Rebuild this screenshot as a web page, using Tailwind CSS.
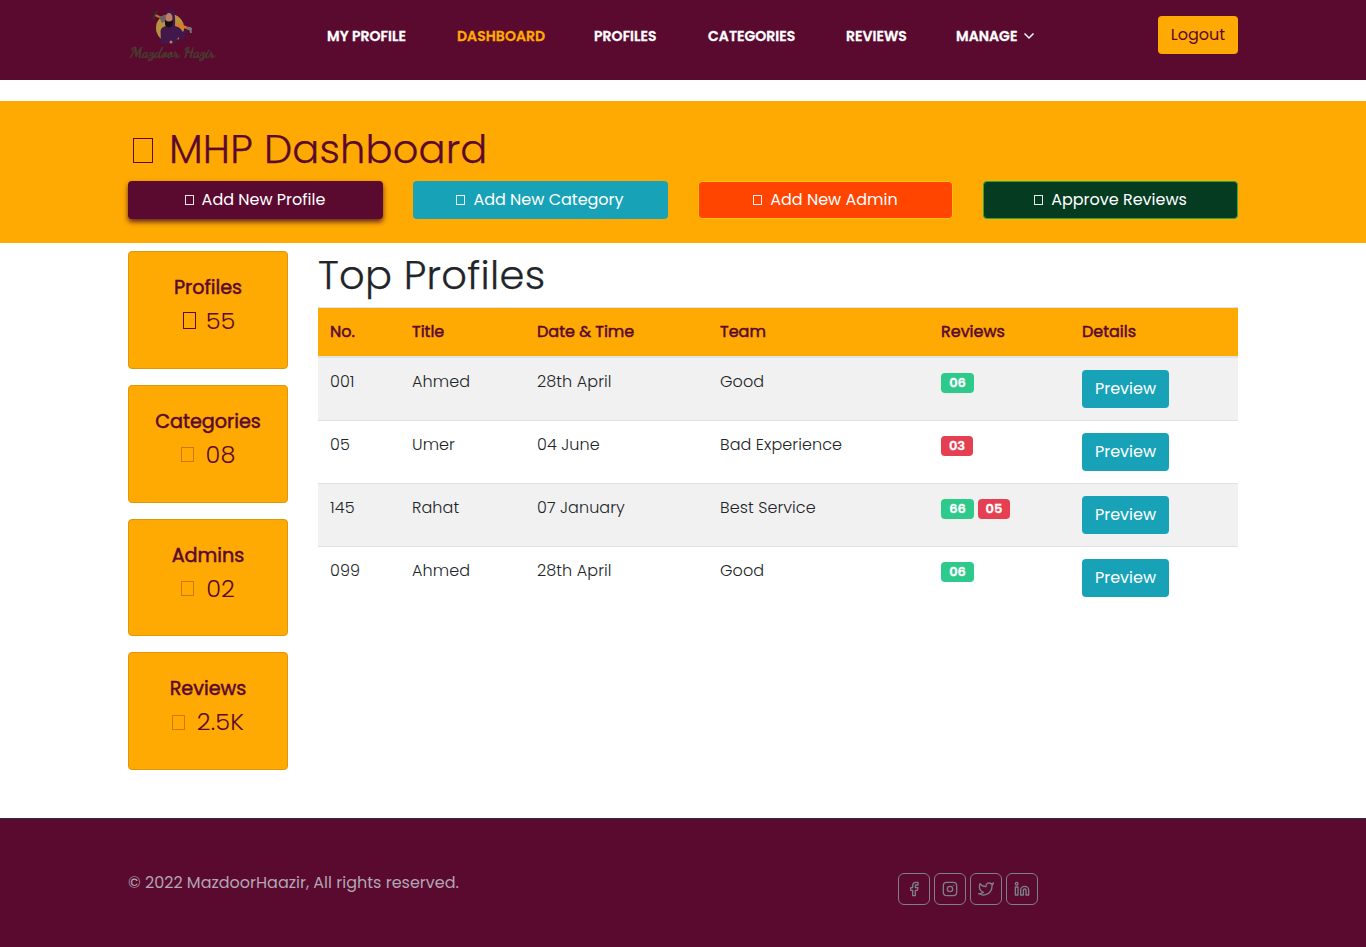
<!DOCTYPE html>
<html lang="en">
<head>
<meta charset="utf-8">
<title>MHP Dashboard</title>
<script src="https://cdn.jsdelivr.net/npm/@tailwindcss/browser@4"></script>
</head>
<body class="bg-white text-[#212529] font-['Poppins','Inter','Open_Sans',sans-serif] text-base font-light overflow-x-hidden">
<div class="h-[947px] flex flex-col">
<header class="h-20 bg-[#5a092f] shrink-0">
  <div class="w-[1110px] mx-auto flex items-start">
    <svg class="w-[90px] h-[64px] shrink-0" viewBox="0 0 90 64">
      <circle cx="42" cy="28" r="14" fill="#b8923f"/>
      <path d="M27 15L38 20" stroke="#c76a25" stroke-width="2"/>
      <path d="M25.500 19q0-5 4-8" fill="none" stroke="#2f3422" stroke-width="2"/>
      <path d="M31 17l6-2 1 6-4 2z" fill="#6a6468"/>
      <path d="M33 44l-.5-13q.5-4 5.500-5-2-17 4-17.500 6 .5 5 17.500 5 1 6.500 4l3.500 5q0 5-4 5-2-1-3-3l-1 6z" fill="#42174a"/>
      <ellipse cx="41" cy="18" rx="3.500" ry="5" fill="#bd7d66"/>
      <path d="M37 20q4 3 7.500 0v5q-3.500 5-7.500 0z" fill="#160d14"/>
      <path d="M48.500 24L62 29" stroke="#e27622" stroke-width="2.500"/>
      <path d="M58 28l6 1M62 27l1 6" stroke="#77727a" stroke-width="2"/>
      <path d="M54 34l5-3" stroke="#42174a" stroke-width="3"/>
      <circle cx="43" cy="42" r="1.500" fill="#c47a5f"/>
      <text x="2" y="56.500" textLength="85" lengthAdjust="spacingAndGlyphs" font-family="Dancing Script, Brush Script MT, Liberation Serif, cursive" font-weight="bold" font-size="14" fill="#4a3d30" stroke="#4a3d30" stroke-width=".4">Mazdoor Hazir</text>
    </svg>
    <nav class="ml-[109px] mt-[25px] flex h-[22px] items-center text-sm font-semibold tracking-[0.050px] [-webkit-text-stroke:0.300px] text-white whitespace-nowrap">
      <a class="w-[130px]">MY PROFILE</a>
      <a class="w-[137px] text-[#ffa903]">DASHBOARD</a>
      <a class="w-[114px]">PROFILES</a>
      <a class="w-[138px]">CATEGORIES</a>
      <a class="w-[110px]">REVIEWS</a>
      <a class="flex items-center"><span class="w-[67px]">MANAGE</span>
        <svg class="w-3 h-3" viewBox="0 0 12 12" fill="none" stroke="#fff" stroke-width="1.500"><path d="M1.500 3.500L6 8l4.500-4.500"/></svg></a>
    </nav>
    <button class="ml-auto mt-4 w-20 h-[38px] rounded bg-[#ffa903] text-[#5a092f] font-normal">Logout</button>
  </div>
</header>
<section class="mt-[21px] h-[142px] bg-[#ffa903] shrink-0">
  <div class="w-[1110px] mx-auto pt-6">
    <h1 class="h-12 flex items-center text-[40px] leading-[48px] text-[#5a092f] whitespace-nowrap"><span class="ml-[5px] mt-[3px] mr-4 w-[20px] h-[25px] border border-[#5a092f]"></span><span class="tracking-[0.150px] [-webkit-text-stroke:0.250px]">MHP Dashboard</span></h1>
    <div class="mt-2 grid grid-cols-4 gap-[30px] text-white font-normal">
      <a class="h-[38px] rounded bg-[#5a092f] flex items-center justify-center gap-2 shadow-[0_3px_5px_rgba(60,10,40,0.8)]"><span class="w-[9px] h-[10px] border border-white/90"></span><span class="mr-px">Add New Profile</span></a>
      <a class="h-[38px] rounded bg-[#18a2b8] flex items-center justify-center gap-2"><span class="w-[9px] h-[10px] border border-white/90"></span><span class="mr-px">Add New Category</span></a>
      <a class="h-[38px] rounded bg-[#ff4500] border border-[#ffc107] flex items-center justify-center gap-2"><span class="w-[9px] h-[10px] border border-white/90"></span><span>Add New Admin</span></a>
      <a class="h-[38px] rounded bg-[#053b21] border border-[#28a745] flex items-center justify-center gap-2"><span class="w-[9px] h-[10px] border border-white/90"></span><span>Approve Reviews</span></a>
    </div>
  </div>
</section>
<main class="w-[1110px] mx-auto mt-[8.400px] h-[566.600px] flex gap-[30px] shrink-0">
  <aside class="w-40 flex flex-col gap-4 text-[#5a092f] text-center">
    <div class="h-[117.600px] shrink-0 rounded bg-[#ffa903] border border-[#dd9708] pt-6"><h4 class="text-[19.200px] leading-6 font-normal [-webkit-text-stroke:0.500px]">Profiles</h4><p class="mt-[6px] flex items-center justify-center gap-[10px] text-2xl leading-[29px]"><span class="w-[13px] h-[17px] ml-[2px] border border-[#5a092f]"></span>55</p></div>
    <div class="h-[117.600px] shrink-0 rounded bg-[#ffa903] border border-[#dd9708] pt-6"><h4 class="text-[19.200px] leading-6 font-normal [-webkit-text-stroke:0.500px]">Categories</h4><p class="mt-[6px] flex items-center justify-center gap-[12px] text-2xl leading-[29px]"><span class="w-[13px] h-[15px] mt-px border border-[#c97a10]"></span>08</p></div>
    <div class="h-[117.600px] shrink-0 rounded bg-[#ffa903] border border-[#dd9708] pt-6"><h4 class="text-[19.200px] leading-6 font-normal [-webkit-text-stroke:0.500px]">Admins</h4><p class="mt-[6px] flex items-center justify-center gap-[12px] text-2xl leading-[29px]"><span class="w-[13px] h-[15px] mt-px border border-[#c97a10]"></span>02</p></div>
    <div class="h-[117.600px] shrink-0 rounded bg-[#ffa903] border border-[#dd9708] pt-6"><h4 class="text-[19.200px] leading-6 font-normal [-webkit-text-stroke:0.500px]">Reviews</h4><p class="mt-[6px] flex items-center justify-center gap-[12px] text-2xl leading-[29px]"><span class="w-[13px] h-[15px] mt-px border border-[#c97a10]"></span><span class="tracking-[0.200px]">2.5K</span></p></div>
  </aside>
  <div class="w-[920px]">
    <h1 class="text-[40px] leading-[48px] mb-[7.600px]"><span class="tracking-[0.300px] [-webkit-text-stroke:0.250px]">Top Profiles</span></h1>
    <table class="w-[920px] table-fixed border-collapse text-left">
      <colgroup><col class="w-[82px]"><col class="w-[125px]"><col class="w-[183px]"><col class="w-[221px]"><col class="w-[141px]"><col class="w-[168px]"></colgroup>
      <thead class="bg-[#ffa903] text-[#5a092f]">
        <tr class="h-[49.600px] border-t border-b-2 border-[#dee2e6] *:px-3 *:font-normal *:[-webkit-text-stroke:0.500px]"><th>No.</th><th>Title</th><th>Date &amp; Time</th><th>Team</th><th>Reviews</th><th>Details</th></tr>
      </thead>
      <tbody class="tracking-[0.080px]">
        <tr class="h-[63.500px] bg-[#f1f1f1] border-b border-[#dee2e6] *:px-3 *:pt-3 *:align-top"><td>001</td><td>Ahmed</td><td>28th April</td><td>Good</td><td><span class="flex gap-1 pt-[3px] text-[13px] tracking-normal text-white [-webkit-text-stroke:0.300px]"><b class="font-semibold w-[33px] h-5 rounded bg-[#2dca8c] text-center leading-5">06</b></span></td><td><a class="flex w-[87px] h-[38px] rounded bg-[#18a2b8] text-white font-normal tracking-normal items-center justify-center">Preview</a></td></tr>
        <tr class="h-[63px] border-b border-[#dee2e6] *:px-3 *:pt-3 *:align-top"><td>05</td><td>Umer</td><td>04 June</td><td>Bad Experience</td><td><span class="flex gap-1 pt-[3px] text-[13px] tracking-normal text-white [-webkit-text-stroke:0.300px]"><b class="font-semibold w-8 h-5 rounded bg-[#e53f52] text-center leading-5">03</b></span></td><td><a class="flex w-[87px] h-[38px] rounded bg-[#18a2b8] text-white font-normal tracking-normal items-center justify-center">Preview</a></td></tr>
        <tr class="h-[63px] bg-[#f1f1f1] border-b border-[#dee2e6] *:px-3 *:pt-3 *:align-top"><td>145</td><td>Rahat</td><td>07 January</td><td>Best Service</td><td><span class="flex gap-1 pt-[3px] text-[13px] tracking-normal text-white [-webkit-text-stroke:0.300px]"><b class="font-semibold w-[33px] h-5 rounded bg-[#2dca8c] text-center leading-5">66</b><b class="font-semibold w-8 h-5 rounded bg-[#e53f52] text-center leading-5">05</b></span></td><td><a class="flex w-[87px] h-[38px] rounded bg-[#18a2b8] text-white font-normal tracking-normal items-center justify-center">Preview</a></td></tr>
        <tr class="h-[63px] *:px-3 *:pt-3 *:align-top"><td>099</td><td>Ahmed</td><td>28th April</td><td>Good</td><td><span class="flex gap-1 pt-[3px] text-[13px] tracking-normal text-white [-webkit-text-stroke:0.300px]"><b class="font-semibold w-[33px] h-5 rounded bg-[#2dca8c] text-center leading-5">06</b></span></td><td><a class="flex w-[87px] h-[38px] rounded bg-[#18a2b8] text-white font-normal tracking-normal items-center justify-center">Preview</a></td></tr>
      </tbody>
    </table>
  </div>
</main>
<footer class="flex-1 bg-[#5a092f] border-t border-[#2b2f55]">
  <div class="w-[1110px] mx-auto pt-[54px] flex items-start">
    <p class="w-[770px] leading-5 font-normal text-[#b3a5b3]">© 2022 MazdoorHaazir, All rights reserved.</p>
    <div class="flex gap-1 text-[#7d7f8b]">
      <a class="w-8 h-8 rounded-md border border-[#7d7f8b] flex items-center justify-center"><svg class="w-4 h-4" viewBox="0 0 24 24" fill="none" stroke="currentColor" stroke-width="2" stroke-linejoin="round"><path d="M18 2h-3a5 5 0 0 0-5 5v3H7v4h3v8h4v-8h3l1-4h-4V7a1 1 0 0 1 1-1h3z"/></svg></a>
      <a class="w-8 h-8 rounded-md border border-[#7d7f8b] flex items-center justify-center"><svg class="w-4 h-4" viewBox="0 0 24 24" fill="none" stroke="currentColor" stroke-width="2" stroke-linecap="round"><rect x="2" y="2" width="20" height="20" rx="5"/><circle cx="12" cy="12" r="4"/><path d="M17.500 6.500h.01"/></svg></a>
      <a class="w-8 h-8 rounded-md border border-[#7d7f8b] flex items-center justify-center"><svg class="w-4 h-4" viewBox="0 0 24 24" fill="none" stroke="currentColor" stroke-width="2" stroke-linejoin="round"><path d="M23 3a10.900 10.900 0 0 1-3.140 1.530 4.480 4.480 0 0 0-7.860 3v1A10.660 10.660 0 0 1 3 4s-4 9 5 13a11.640 11.640 0 0 1-7 2c9 5 20 0 20-11.500a4.500 4.500 0 0 0-.08-.83A7.720 7.720 0 0 0 23 3z"/></svg></a>
      <a class="w-8 h-8 rounded-md border border-[#7d7f8b] flex items-center justify-center"><svg class="w-4 h-4" viewBox="0 0 24 24" fill="none" stroke="currentColor" stroke-width="2" stroke-linejoin="round"><path d="M16 8a6 6 0 0 1 6 6v7h-4v-7a2 2 0 0 0-4 0v7h-4v-7a6 6 0 0 1 6-6zM2 9h4v12H2z"/><circle cx="4" cy="4" r="2"/></svg></a>
    </div>
  </div>
</footer>
</div>
</body>
</html>
